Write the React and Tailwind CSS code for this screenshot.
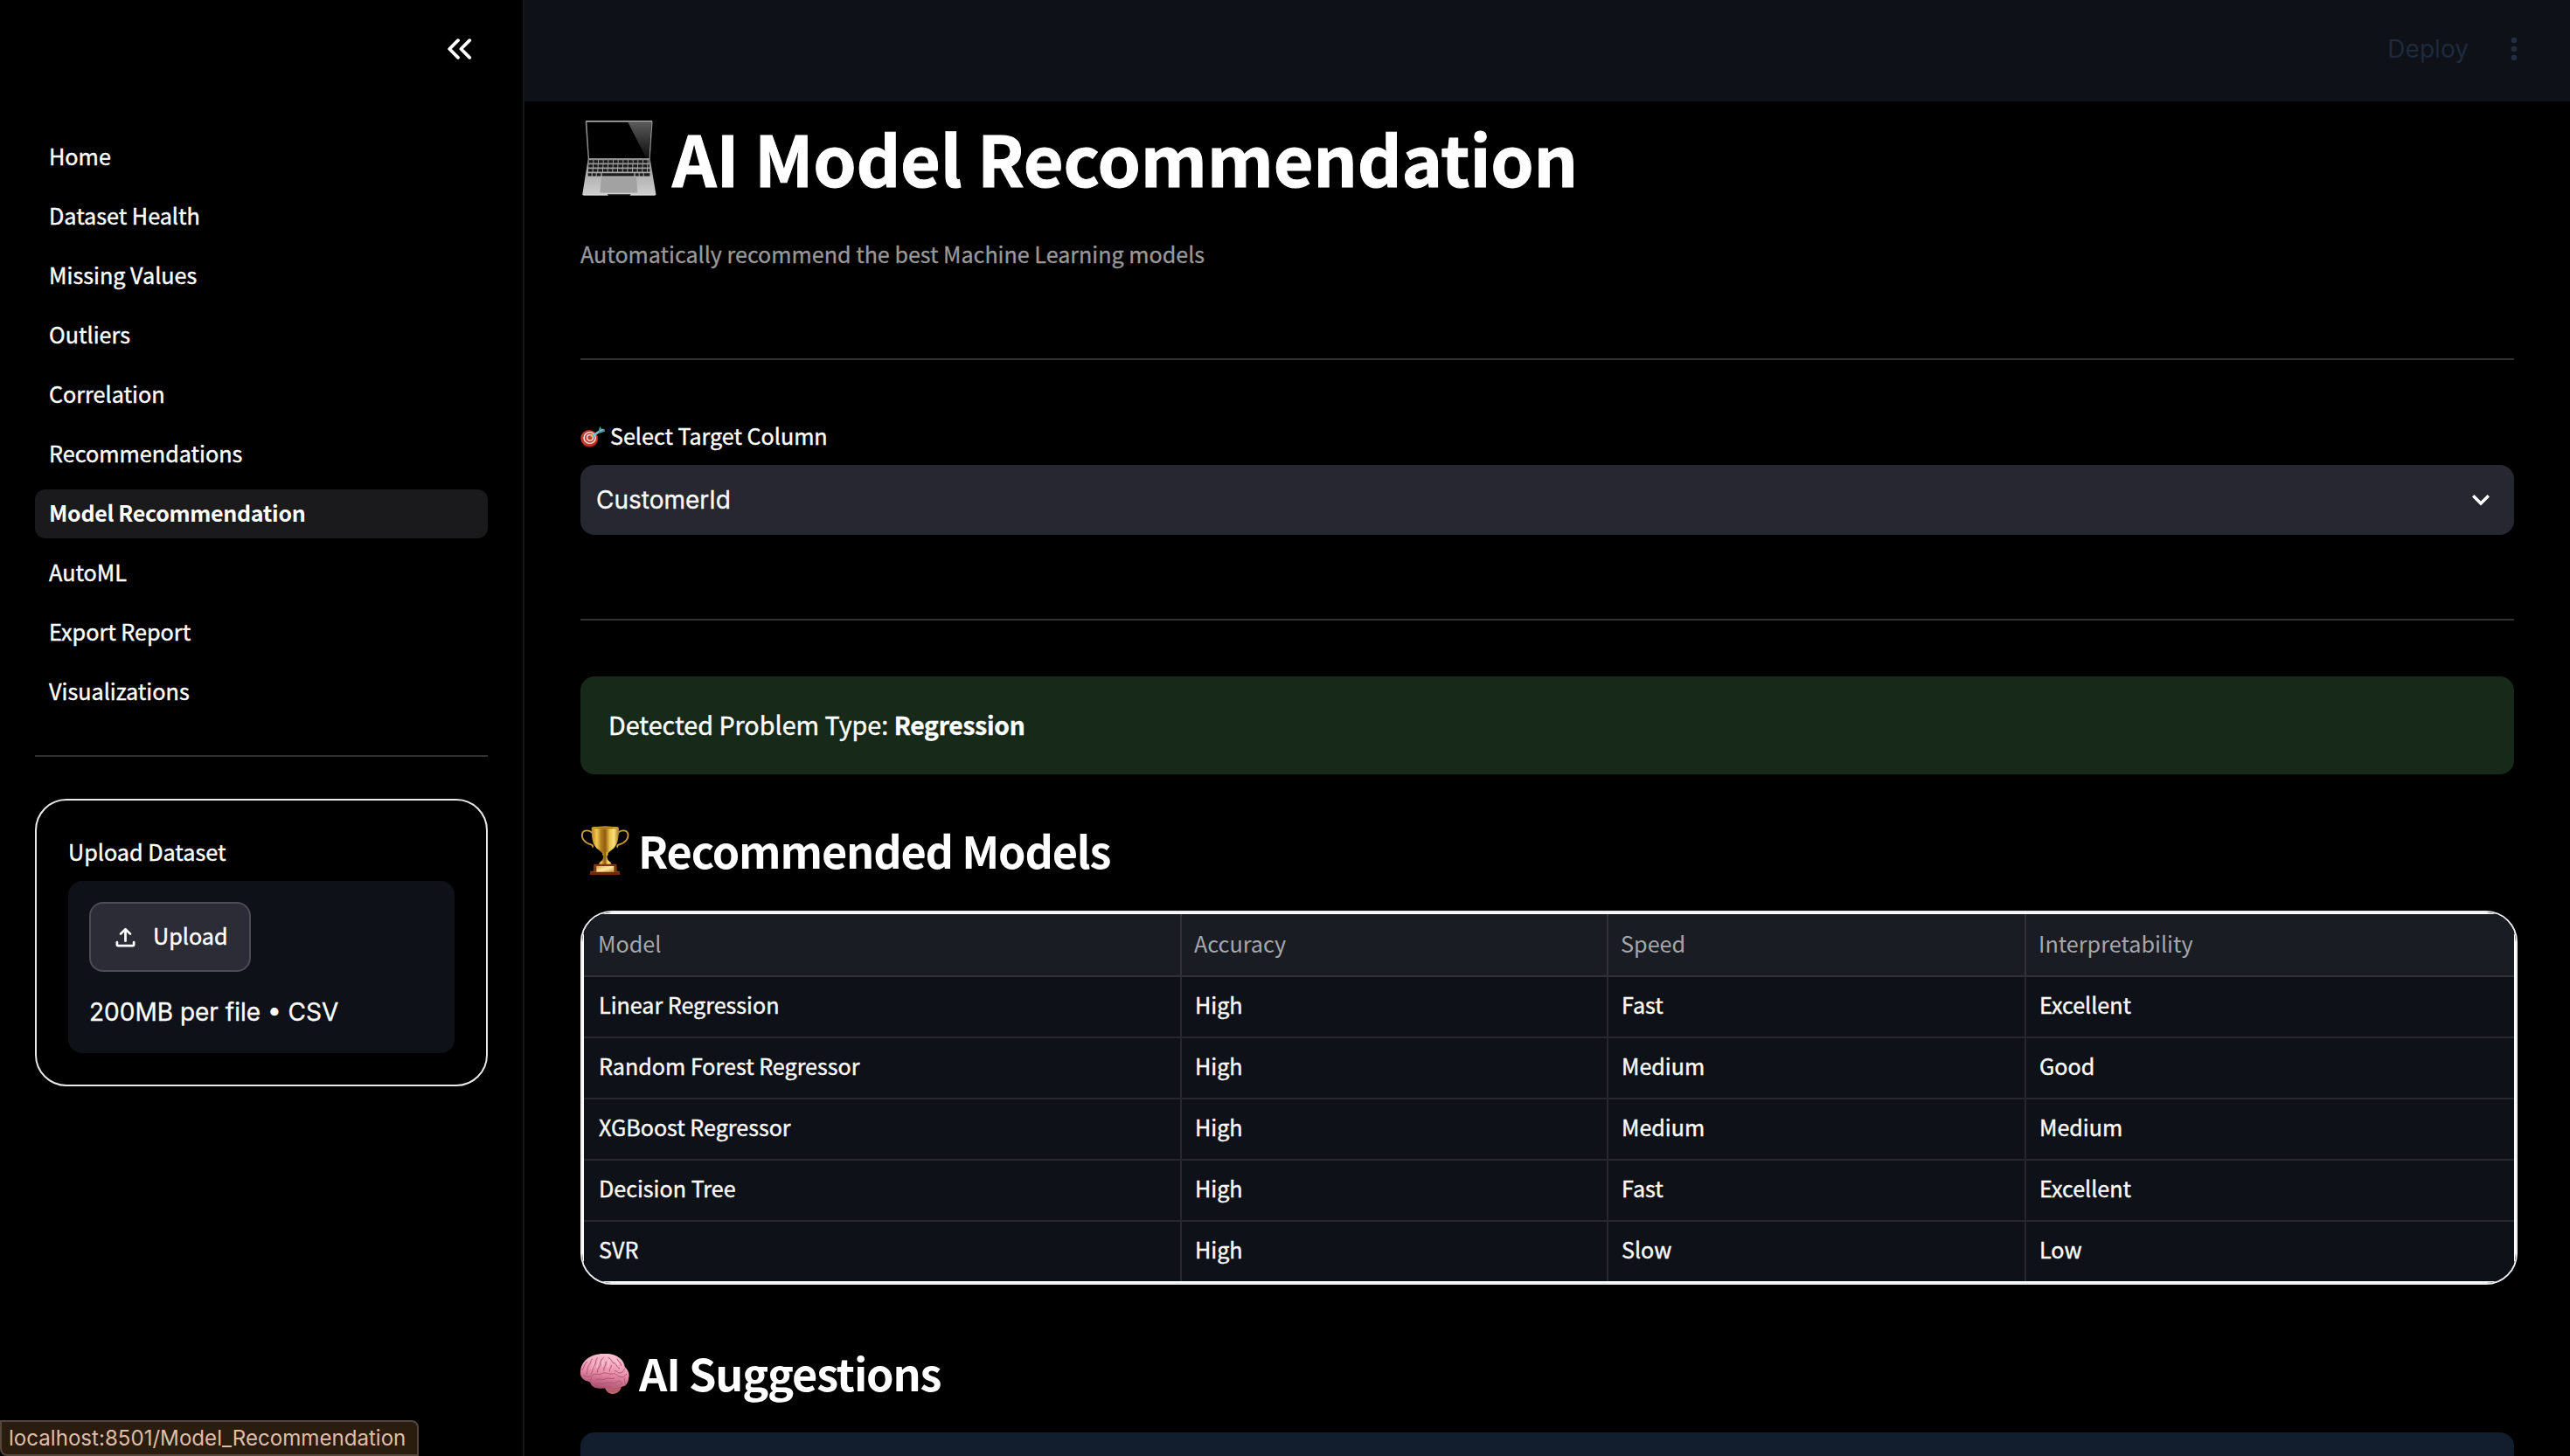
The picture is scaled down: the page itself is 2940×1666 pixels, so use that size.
import React from "react";

const navItems = [
  "Home",
  "Dataset Health",
  "Missing Values",
  "Outliers",
  "Correlation",
  "Recommendations",
  "Model Recommendation",
  "AutoML",
  "Export Report",
  "Visualizations",
];

const models = [
  ["Linear Regression", "High", "Fast", "Excellent"],
  ["Random Forest Regressor", "High", "Medium", "Good"],
  ["XGBoost Regressor", "High", "Medium", "Medium"],
  ["Decision Tree", "High", "Fast", "Excellent"],
  ["SVR", "High", "Slow", "Low"],
];

function CollapseIcon() {
  return (
    <svg viewBox="0 0 28 24" className="h-6 w-7" fill="none" stroke="#fff" strokeWidth="3.800" strokeLinecap="round" strokeLinejoin="round">
      <path d="M12 2.2 2.2 12l9.8 9.8M25.2 2.2 15.4 12l9.8 9.8" />
    </svg>
  );
}

function UploadIcon() {
  return (
    <svg viewBox="0 0 24 24" className="h-[33px] w-[33px] shrink-0" fill="none" stroke="#fff" strokeWidth="2" strokeLinecap="round" strokeLinejoin="round">
      <path d="M5 16v2a1 1 0 0 0 1 1h12a1 1 0 0 0 1-1v-2" />
      <path d="M12 15V6" />
      <path d="M8 9.2 12 5.2l4 4" />
    </svg>
  );
}

function LaptopIcon() {
  const keyRows = [171, 186, 201, 216];
  return (
    <svg viewBox="24 33 264 264" className="mt-[10px] h-[88px] w-[88px] shrink-0">
      <defs>
        <linearGradient id="lapBase" x1="0" y1="0" x2="0" y2="1">
          <stop offset="0" stopColor="#8e8e8e" />
          <stop offset="0.5" stopColor="#b4b4b4" />
          <stop offset="1" stopColor="#cfcfcf" />
        </linearGradient>
        <linearGradient id="lapGlare" x1="0" y1="0" x2="0" y2="1">
          <stop offset="0" stopColor="#5c5c5c" />
          <stop offset="1" stopColor="#0c0c0c" />
        </linearGradient>
      </defs>
      <path d="M46 36H267Q272 36 271.500 41L263 168H50L41 41Q41 36 46 36Z" fill="#8d8d8d" />
      <path d="M46 41H267L259 165H54Z" fill="#000" />
      <path d="M187 41H267L259 165H250Z" fill="url(#lapGlare)" />
      <path d="M43 37.500H270" stroke="#b9b9b9" strokeWidth="3" />
      <path d="M50 167H263L283 288Q283 293 278 293H36Q31 293 31 288Z" fill="url(#lapBase)" />
      {keyRows.map((y, i) => (
        <path
          key={y}
          d={`M${53 - i} ${y + 5.5}H${260 + i}`}
          stroke="#1b1b1b"
          strokeWidth="10"
          strokeDasharray={i === 3 ? "12 3 12 3 14 4 110 4 12 3 12 3 20" : "14 3"}
        />
      ))}
      <path d="M97 232H215L219 283H92Z" fill="#a2a2a2" stroke="#8f8f8f" strokeWidth="1" />
      <path d="M31 289H283" stroke="#dcdcdc" strokeWidth="2" />
      <path d="M116 289H197L193 294H120Z" fill="#111" />
    </svg>
  );
}

function TargetIcon() {
  return (
    <svg viewBox="72 78 84 84" className="mt-2 h-7 w-7 shrink-0">
      <ellipse cx="104" cy="127" rx="29" ry="29" fill="#7c1713" />
      <ellipse cx="102" cy="124" rx="29" ry="28" fill="#c7372c" />
      <ellipse cx="104" cy="123" rx="22" ry="21" fill="#f3e4e0" />
      <ellipse cx="104" cy="123" rx="17.500" ry="17" fill="#c93a2f" />
      <ellipse cx="105" cy="122" rx="12.500" ry="12" fill="#f3e4e0" />
      <ellipse cx="105" cy="122" rx="8" ry="7.500" fill="#c5352a" />
      <path d="M107 120 120 112" stroke="#e0a832" strokeWidth="4" />
      <path d="M117 114 142 98" stroke="#67c3cf" strokeWidth="8" strokeLinecap="round" />
      <path d="M134 99 139 83l6 10 9-1 2 9-12 4-7 2Z" fill="#4e9aa9" />
      <path d="M138 100 150 93" stroke="#a6e3e8" strokeWidth="2" />
    </svg>
  );
}

function TrophyIcon() {
  return (
    <svg viewBox="24 30 168 168" className="mt-[6px] h-14 w-14 shrink-0">
      <defs>
        <linearGradient id="gold" x1="0" x2="1" y1="0" y2="0">
          <stop offset="0" stopColor="#b9821d" />
          <stop offset="0.2" stopColor="#f0cb54" />
          <stop offset="0.34" stopColor="#b57f1e" />
          <stop offset="0.5" stopColor="#8f5c12" />
          <stop offset="0.66" stopColor="#eac24b" />
          <stop offset="0.82" stopColor="#f8e07c" />
          <stop offset="1" stopColor="#a8741a" />
        </linearGradient>
        <linearGradient id="plate" x1="0" x2="1" y1="0" y2="1">
          <stop offset="0" stopColor="#d9a441" />
          <stop offset="0.5" stopColor="#fbe9a0" />
          <stop offset="1" stopColor="#d39b3a" />
        </linearGradient>
      </defs>
      <g fill="none" stroke="#cf9f3c" strokeWidth="5.500" strokeLinecap="round">
        <path d="M64 54C56 44 34 42 30 57C27 72 37 88 60 94Q68 96 66 102" />
        <path d="M153 54C161 44 183 42 187 57C190 72 180 88 157 94Q149 96 151 102" />
      </g>
      <path d="M62 36Q109 28 156 36C156 66 154 92 138 107Q124 117 119 124H99Q94 117 80 107C64 92 62 66 62 36Z" fill="url(#gold)" />
      <ellipse cx="109" cy="36" rx="47" ry="4.500" fill="#e0b548" />
      <ellipse cx="109" cy="37" rx="41" ry="2.500" fill="#a06c18" />
      <path d="M101 120H117L119 128 115 134Q116 147 124 152Q131 154 131 162H87Q87 154 94 152Q102 147 103 134L99 128Z" fill="url(#gold)" />
      <path d="M70 161H148L150 188H68Z" fill="#7d3512" />
      <path d="M58 186H158L161 198H55Z" fill="#6e2a0d" />
      <path d="M58 187H158" stroke="#a0522a" strokeWidth="2" />
      <path d="M79 168H139V188H79Z" fill="url(#plate)" />
    </svg>
  );
}

function BrainIcon() {
  return (
    <svg viewBox="24 42 168 168" className="mt-3 h-14 w-14 shrink-0">
      <defs>
        <linearGradient id="brain" x1="0.6" x2="0.35" y1="0" y2="1">
          <stop offset="0" stopColor="#fac6d3" />
          <stop offset="0.5" stopColor="#ec93ae" />
          <stop offset="1" stopColor="#a94a6b" />
        </linearGradient>
      </defs>
      <path d="M104 148Q112 180 134 181Q162 180 166 148Z" fill="#c06672" />
      <path d="M116 160Q138 168 160 158M118 168Q138 176 156 167" stroke="#98485a" strokeWidth="2" fill="none" />
      <path d="M24 104C24 82 38 60 62 50C84 40 122 38 144 48C166 58 174 72 176 86C188 98 194 112 189 126C189 142 180 154 164 156C146 154 134 158 112 160C92 164 66 160 60 146C56 138 54 138 46 136C32 132 22 120 24 104Z" fill="url(#brain)" />
      <g fill="none" stroke="#b05476" strokeWidth="3" strokeLinecap="round" strokeLinejoin="round">
        <path d="M30 98C38 88 36 78 46 70M44 112C52 100 44 92 54 80C60 74 58 66 64 60" />
        <path d="M60 112C70 100 62 92 72 82C80 72 74 64 82 56M82 106C80 94 94 86 92 74C92 66 98 60 104 54" />
        <path d="M104 100C102 88 114 82 112 70M120 56C132 58 128 70 138 74C150 76 146 90 158 92" />
        <path d="M124 102C122 92 132 90 130 82M150 60C152 70 164 70 164 82M142 100C150 98 150 110 162 108C172 106 172 96 176 92" />
        <path d="M34 116C46 124 54 118 62 120C72 104 86 118 98 110C112 102 122 116 136 110C146 108 150 120 164 122C176 124 178 114 182 112" />
        <path d="M62 124C58 132 58 138 62 144M76 134C88 122 98 136 110 128C122 122 128 132 140 126" />
        <path d="M74 148C88 138 98 150 112 142C126 136 136 146 150 140C154 130 166 136 166 146M176 126C172 134 180 138 178 144" />
      </g>
      <g fill="none" stroke="#ffdfe8" strokeWidth="3" strokeLinecap="round" opacity="0.7">
        <path d="M70 72C66 80 68 86 62 94M88 66C84 74 86 80 80 88M102 66C100 72 104 78 100 86M122 66C124 74 120 80 118 88M140 60C144 66 152 68 154 78" />
      </g>
    </svg>
  );
}

function Sidebar() {
  return (
    <aside className="flex w-[600px] shrink-0 flex-col border-r-2 border-[#161616] bg-black pr-10 pl-10">
      <div className="flex h-[152px] items-start justify-end pt-11 pr-[18px]">
        <CollapseIcon />
      </div>
      <nav className="flex flex-col gap-3">
        {navItems.map((item) => (
          <a
            key={item}
            className={
              item === "Model Recommendation"
                ? "h-14 rounded-xl bg-[#1a1a1c] pl-4 text-[25px] leading-[53px] font-bold tracking-[-0.3px] text-white"
                : "h-14 rounded-xl pl-4 text-[25.2px] leading-[53px] text-white [-webkit-text-stroke:0.4px_white]"
            }
          >
            {item}
          </a>
        ))}
      </nav>
      <div className="mt-[44px] h-0.5 shrink-0 bg-[#313133]" />
      <section className="mt-12 h-[329px] rounded-[36px] border-2 border-[#e9e9e9] px-9 pt-[38px]">
        <p className="text-[25.2px] leading-10 text-white [-webkit-text-stroke:0.4px_white]">Upload Dataset</p>
        <div className="mt-[14px] h-[197px] rounded-2xl bg-[#0e1117] px-6 pt-6">
          <button className="flex h-20 w-[185px] items-center gap-[15px] rounded-2xl border-2 border-[#4c4c54] bg-[#2b2c36] pl-[23px]">
            <UploadIcon />
            <span className="pb-1 text-[25.2px] leading-10 text-white [-webkit-text-stroke:0.4px_white]">Upload</span>
          </button>
          <p className="mt-[26px] font-['Inter',sans-serif] text-[28px] leading-10 whitespace-nowrap text-white [-webkit-text-stroke:0.3px_white]">
            200MB per file • CSV
          </p>
        </div>
      </section>
    </aside>
  );
}

function Header() {
  return (
    <header className="flex h-[116px] shrink-0 items-center justify-end bg-[#0e1117] pr-[60px] pb-1">
      <span className="font-['Inter',sans-serif] text-[28.1px] leading-10 text-[#1f293c]">Deploy</span>
      <svg viewBox="0 0 8 28" className="ml-[48px] h-7 w-2" fill="#232d41">
        <circle cx="4" cy="4" r="3.300" />
        <circle cx="4" cy="14" r="3.300" />
        <circle cx="4" cy="24" r="3.300" />
      </svg>
    </header>
  );
}

const gridCols = "grid grid-cols-[684px_488px_478px_558px]";

function ModelTable() {
  const heads = [
    ["Model", "pl-4 border-r-2"],
    ["Accuracy", "pl-[14px] border-r-2"],
    ["Speed", "pl-[14px] border-r-2"],
    ["Interpretability", "pl-[14px]"],
  ];
  const cellPad = ["pl-[17px] border-r-2", "pl-[15px] border-r-2", "pl-[15px] border-r-2", "pl-[15px]"];
  return (
    <div className="mt-9 -mr-1 h-[428px] shrink-0 overflow-hidden rounded-[36px] border-2 border-[#ececee]">
      <div className="h-full border-2 border-white bg-[#0e1117]">
        <div className={`${gridCols} h-[72px] border-b-2 border-[#303139] bg-[#1a1c24]`}>
          {heads.map(([label, cls]) => (
            <div key={label} className={`${cls} border-[#303139] text-[25.2px] leading-[66px] text-[#a6a7ab]`}>
              {label}
            </div>
          ))}
        </div>
        {models.map((row, i) => (
          <div key={row[0]} className={`${gridCols} ${i === 4 ? "h-[68px]" : "h-[70px] border-b-2"} border-[#26282e]`}>
            {row.map((cell, j) => (
              <div
                key={j}
                className={`${cellPad[j]} border-[#26282e] text-[25.1px] leading-[62px] text-[#fafafa] [-webkit-text-stroke:0.4px_#fafafa]`}
              >
                {cell}
              </div>
            ))}
          </div>
        ))}
      </div>
    </div>
  );
}

export default function App() {
  return (
    <div className="relative flex h-[1666px] w-[2940px] overflow-hidden bg-black font-['Noto_Sans_CJK_SC',sans-serif]">
      <Sidebar />
      <div className="flex min-w-0 flex-1 flex-col">
        <Header />
        <main className="flex flex-1 flex-col px-16">
          <h1 className="mt-[11px] flex h-[106px] shrink-0 items-start gap-[17px] text-[79px] leading-[106px] font-bold tracking-[-0.22px] text-white [-webkit-text-stroke:1px_white]">
            <LaptopIcon />
            AI Model Recommendation
          </h1>
          <p className="mt-[37px] text-[25.1px] leading-10 text-[#999] [-webkit-text-stroke:0.3px_#999]">
            Automatically recommend the best Machine Learning models
          </p>
          <div className="mt-[100px] h-0.5 shrink-0 bg-[#323232]" />
          <label className="mt-[66px] flex h-10 shrink-0 items-start gap-1.5 text-[25.1px] leading-10 text-white [-webkit-text-stroke:0.4px_white]">
            <TargetIcon />
            Select Target Column
          </label>
          <div className="mt-3.5 flex h-20 shrink-0 items-center justify-between rounded-2xl bg-[#262730] pr-7 pl-[18px]">
            <span className="font-['Inter',sans-serif] text-[28px] leading-10 text-[#fafafa] [-webkit-text-stroke:0.3px_#fafafa]">
              CustomerId
            </span>
            <svg viewBox="0 0 20 14" className="h-3.5 w-5" fill="none" stroke="#fff" strokeWidth="3.400">
              <path d="M1.200 2.200 10 11 18.800 2.200" />
            </svg>
          </div>
          <div className="mt-24 h-0.5 shrink-0 bg-[#323232]" />
          <div className="mt-16 flex h-28 shrink-0 items-center rounded-2xl bg-[#172a19] pb-0.5 pl-8 text-[28.7px] leading-[48px] text-white [-webkit-text-stroke:0.4px_white]">
            <p>
              Detected Problem Type: <strong className="text-[28.1px] font-bold tracking-[-0.2px]">Regression</strong>
            </p>
          </div>
          <h2 className="mt-[53px] flex h-[68px] shrink-0 items-start gap-[10px] text-[50.4px] leading-[68px] font-bold tracking-[-1.15px] text-white">
            <TrophyIcon />
            Recommended Models
          </h2>
          <div className="-mt-px flex flex-col">
            <ModelTable />
          </div>
          <h2 className="mt-[67px] flex h-[68px] shrink-0 items-start gap-[11px] text-[50.4px] leading-[68px] font-bold tracking-[-1.15px] text-white">
            <BrainIcon />
            AI Suggestions
          </h2>
          <div className="mt-[34px] h-[27px] shrink-0 rounded-t-2xl bg-[#121e2d]" />
        </main>
      </div>
      <div className="absolute bottom-0 left-0 flex h-[41px] w-[479px] items-center rounded-tr-lg rounded-bl-lg border-2 border-[#54463b] bg-[#2b1c10] pl-2 font-['Inter',sans-serif] text-[24.1px] leading-8 whitespace-nowrap text-[#dfbda6]">
        localhost:8501/Model_Recommendation
      </div>
    </div>
  );
}
